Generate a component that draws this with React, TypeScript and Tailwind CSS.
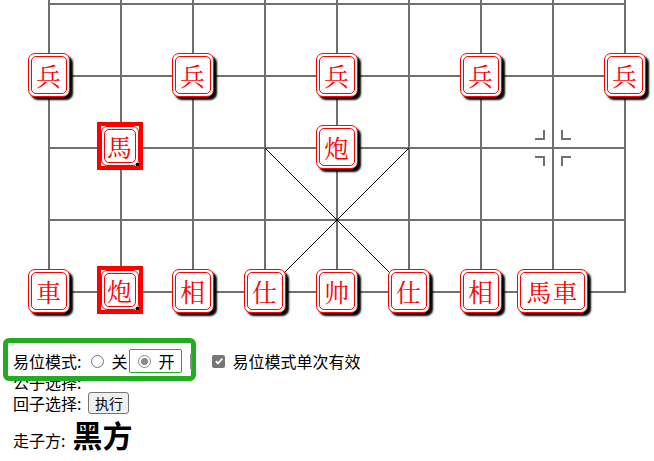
import React from "react";

const COLS = [49, 121, 193, 265, 337, 409, 481, 553, 625];
const ROWS = [4, 76, 148, 220, 292];

type P = { x: number; y: number; t: string; sel?: boolean; wide?: boolean };

const PIECES: P[] = [
  { x: 49, y: 76, t: "兵" },
  { x: 193, y: 76, t: "兵" },
  { x: 337, y: 76, t: "兵" },
  { x: 481, y: 76, t: "兵" },
  { x: 625, y: 76, t: "兵" },
  { x: 121, y: 148, t: "馬", sel: true },
  { x: 337, y: 148, t: "炮" },
  { x: 49, y: 292, t: "車" },
  { x: 121, y: 292, t: "炮", sel: true },
  { x: 193, y: 292, t: "相" },
  { x: 265, y: 292, t: "仕" },
  { x: 337, y: 292, t: "帅" },
  { x: 409, y: 292, t: "仕" },
  { x: 481, y: 292, t: "相" },
  { x: 553, y: 292, t: "馬車", wide: true },
];

const pieceFont = {
  fontFamily: '"Noto Serif CJK SC", "Noto Sans CJK SC", "Noto Sans CJK TC", serif',
};

function Face({ t }: { t: string }) {
  return (
    <div className="w-full h-full rounded-[5px] border border-[#ff0000] flex items-center justify-center text-[25px] leading-none text-[#ff0000] tracking-[1px]">
      {t}
    </div>
  );
}

function Piece({ p }: { p: P }) {
  if (p.sel) {
    return (
      <div
        className="absolute w-[46px] h-[48px] border-[4px] border-[#ff0000] bg-white"
        style={{ left: p.x - 24, top: p.y - 26, ...pieceFont }}
      >
        <div className="w-full h-full rounded-[6px] border border-[#ff0000] p-[2px]">
          <Face t={p.t} />
        </div>
        <div className="absolute right-0 bottom-0 w-[3px] h-[3px] bg-black" />
      </div>
    );
  }
  const w = p.wide ? 71 : 42;
  return (
    <div
      className="absolute h-[44px] rounded-[7px] border border-[#ff0000] bg-white p-[2px] shadow-[3px_3px_2px_#000]"
      style={{ left: p.x - Math.round(w / 2), top: p.y - 23, width: w, ...pieceFont }}
    >
      <Face t={p.t} />
    </div>
  );
}

function Board() {
  const mx = 553;
  const my = 148;
  const g = "#707070";
  return (
    <div className="relative w-[654px] h-[340px]">
      <svg className="absolute left-0 top-0" width="654" height="340">
        {COLS.map((x) => (
          <rect key={"v" + x} x={x - 1} y={0} width={2} height={293} fill={g} />
        ))}
        {ROWS.map((y) => (
          <rect key={"h" + y} x={48} y={y - 1} width={578} height={2} fill={g} />
        ))}
        <line x1={265} y1={148} x2={409} y2={292} stroke="#000" strokeWidth={1} />
        <line x1={409} y1={148} x2={265} y2={292} stroke="#000" strokeWidth={1} />
        <path
          d={`M${mx - 18} ${my - 9} H${mx - 9} V${my - 18}
              M${mx + 9} ${my - 18} V${my - 9} H${mx + 18}
              M${mx - 18} ${my + 9} H${mx - 9} V${my + 18}
              M${mx + 9} ${my + 18} V${my + 9} H${mx + 18}`}
          stroke={g}
          strokeWidth={2}
          fill="none"
        />
      </svg>
      {PIECES.map((p, i) => (
        <Piece key={i} p={p} />
      ))}
    </div>
  );
}

function RadioOff() {
  return <span className="inline-block w-[13px] h-[13px] rounded-full border border-[#767676] bg-white" />;
}

function RadioOn() {
  return (
    <span className="inline-flex w-[13px] h-[13px] rounded-full border border-[#8a8a8a] bg-white items-center justify-center">
      <span className="w-[7px] h-[7px] rounded-full bg-[#8a8a8a]" />
    </span>
  );
}

function CheckOn() {
  return (
    <span className="inline-flex w-[13px] h-[13px] rounded-[2px] bg-[#767676] items-center justify-center">
      <svg width="10" height="10" viewBox="0 0 10 10">
        <path d="M1.8 5.2 L4 7.4 L8.3 2.6" stroke="#fff" strokeWidth="1.8" fill="none" />
      </svg>
    </span>
  );
}

export default function App() {
  return (
    <div
      className="w-[654px] h-[461px] bg-white text-black overflow-hidden"
      style={{ fontFamily: '"Noto Sans CJK SC", "Noto Sans", sans-serif' }}
    >
      <Board />
      <div className="pl-[13px] pt-[10px] text-[16px]">
        <div className="relative h-[22px]">
          <div className="absolute left-[-10px] top-[-12px] w-[193px] h-[43px] rounded-[6px] border-[5px] border-[#22ac22] bg-white z-[1]" />
          <div className="relative z-[2] flex items-center h-[22px] leading-[22px]">
            <span>易位模式:</span>
            <span className="ml-[10px] flex"><RadioOff /></span>
            <span className="ml-[7px]">关</span>
            <span className="ml-[2px] w-[53px] h-[24px] border border-[#22ac22] rounded-[2px] flex items-center pl-[8px]">
              <RadioOn />
              <span className="ml-[7px]">开</span>
            </span>
            <span className="ml-[8px] w-[2px] h-[15px] bg-[#8a8a8a]" />
            <span className="ml-[20px] flex"><CheckOn /></span>
            <span className="ml-[7px]">易位模式单次有效</span>
          </div>
        </div>
        <div className="h-[20px] leading-[20px]">公子选择:</div>
        <div className="h-[22px] flex items-center leading-[20px]">
          <span>回子选择:</span>
          <button className="ml-[7px] w-[41px] h-[22px] border border-[#767676] rounded-[3px] bg-[#efefef] text-[14px] leading-[20px] text-black">
            执行
          </button>
        </div>
        <div className="mt-[2px] flex items-baseline leading-[36px]">
          <span>走子方:</span>
          <span className="ml-[7px] text-[30px] font-bold">黑方</span>
        </div>
      </div>
    </div>
  );
}
